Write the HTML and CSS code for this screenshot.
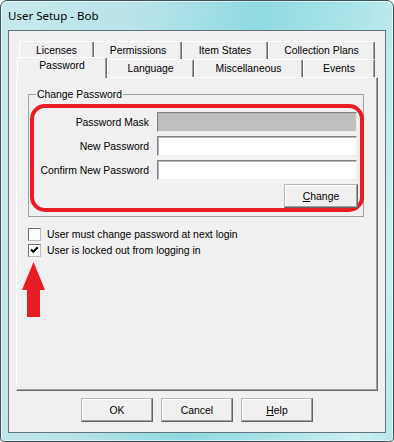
FILE: index.html
```html
<!DOCTYPE html>
<html lang="en">
<head>
  <meta charset="UTF-8">
  <meta name="viewport" content="width=device-width, initial-scale=1.0">
  <title>User Setup - Bob</title>
  <link rel="stylesheet" href="styles.css">
</head>
<body>
  <div class="window">
    <div class="titlebar">User Setup - Bob</div>
    <div class="client">
      <div class="tabs">
        <div class="tab-row back">
          <div class="tab t-licenses">Licenses</div>
          <div class="tab t-permissions">Permissions</div>
          <div class="tab t-states">Item States</div>
          <div class="tab t-plans">Collection Plans</div>
        </div>
        <div class="tab-row front">
          <div class="tab active t-password">Password</div>
          <div class="tab t-language">Language</div>
          <div class="tab t-misc">Miscellaneous</div>
          <div class="tab t-events">Events</div>
        </div>
        <div class="panel">
          <fieldset class="group">
            <legend>Change Password</legend>
            <div class="highlight">
              <div class="form">
                <label>Password Mask</label>
                <div class="field disabled"></div>
                <label>New Password</label>
                <div class="field"></div>
                <label>Confirm New Password</label>
                <div class="field"></div>
              </div>
              <div class="actions">
                <button class="btn btn-change"><u>C</u>hange</button>
              </div>
            </div>
          </fieldset>

          <div class="checks">
            <div class="check">
              <span class="box"></span>
              <span>User must change password at next login</span>
            </div>
            <div class="check">
              <span class="box">
                <svg width="11" height="11" viewBox="0 0 11 11"><path d="M2 4.5 L4.2 6.8 L8.8 2.2" fill="none" stroke="#000" stroke-width="2"/></svg>
              </span>
              <span>User is locked out from logging in</span>
            </div>
          </div>

          <!-- annotation arrow -->
          <svg class="arrow" width="23" height="55" viewBox="0 0 23 55">
            <polygon points="11.5,0 23,28 0,28" fill="#e81c24"/>
            <rect x="5" y="27" width="13" height="28" fill="#e81c24"/>
          </svg>
        </div>
      </div>

      <div class="buttons">
        <button class="btn">OK</button>
        <button class="btn">Cancel</button>
        <button class="btn"><u>H</u>elp</button>
      </div>
    </div>
  </div>
</body>
</html>
```

FILE: styles.css
```css
* {
  box-sizing: border-box;
  margin: 0;
  padding: 0;
}
body {
  background: #fff;
  font-family: 'Liberation Sans', Arial, sans-serif;
  font-size: 10.4px;
  color: #000;
}
.window {
  width: 394px;
  height: 442px;
  border: 1px solid #3f5459;
  border-radius: 7px 7px 4px 4px;
  background: linear-gradient(100deg, #c8e8ec 0%, #b7e4e8 30%, #8fdbe0 55%, #a9e4e7 75%, #cbeff1 92%, #b5e8eb 100%);
  box-shadow: inset 0 0 0 1px rgba(255, 255, 255, 0.55);
  padding: 0 7px 8px;
  display: flex;
  flex-direction: column;
}
.titlebar {
  height: 29px;
  line-height: 29px;
  font-family: 'Noto Sans', sans-serif;
  font-size: 11.5px;
}
.client {
  flex: 1;
  background: #f0f0f0;
  border: 1px solid #5d7478;
  padding: 10px 7px 0;
}

/* tabs */
.tab-row {
  display: flex;
  height: 18px;
}
.tab-row.back {
  padding-left: 3px;
}
.tab-row.front {
  padding-left: 1px;
}
.tab {
  height: 18px;
  line-height: 17px;
  text-align: center;
  background: #f0f0f0;
  border-top: 1px solid #fff;
  border-left: 1px solid #fff;
  border-right: 1px solid #696969;
  box-shadow: inset -1px 0 #a0a0a0;
  border-radius: 2px 2px 0 0;
}
.tab.active {
  height: 21px;
  line-height: 15px;
  margin-top: -2px;
  margin-bottom: -1px;
  position: relative;
  z-index: 1;
}
.t-licenses { width: 75px; }
.t-permissions { width: 88px; }
.t-states { width: 86px; }
.t-plans { width: 107px; }
.t-password { width: 90px; }
.t-language { width: 87px; }
.t-misc { width: 109px; }
.t-events { width: 72px; }

.panel {
  height: 314px;
  border: 1px solid;
  border-color: #fff #696969 #696969 #fff;
  box-shadow: inset -1px -1px #a0a0a0;
}

/* group box */
.group {
  margin: 10px 13px 0 11px;
  border: 1px solid #a0a0a0;
  padding: 0 0 4px 0;
  min-width: 0;
}
.group legend {
  margin-left: 7px;
  padding: 0 1px;
  line-height: 13px;
}
.highlight {
  margin: 3px -1px 0 1px;
  border: 4px solid #e81c24;
  border-radius: 15px;
  padding: 4px 2px 0 0;
}
.form {
  display: grid;
  grid-template-columns: 115px 200px;
  grid-auto-rows: 20px;
  column-gap: 8px;
  row-gap: 4px;
  align-items: center;
}
.form label {
  text-align: right;
  white-space: nowrap;
}
.field {
  height: 20px;
  background: #fff;
  border: 1px solid;
  border-color: #828282 #ececec #ececec #828282;
  box-shadow: inset 1px 1px #b4b4b4;
}
.field.disabled {
  background: #bfbfbf;
}
.actions {
  display: flex;
  justify-content: flex-end;
  margin-top: 4px;
}

/* buttons */
.btn {
  width: 72px;
  height: 24px;
  font: inherit;
  color: #000;
  background: #f0f0f0;
  border: 1px solid;
  border-color: #b8b8b8 #646464 #646464 #b8b8b8;
  box-shadow: inset -1px -1px #a0a0a0, inset 1px 1px #fff;
}
.btn-change {
  width: 74px;
}
.buttons {
  display: flex;
  justify-content: center;
  gap: 8px;
  margin-top: 7px;
}

/* checkboxes */
.checks {
  margin: 9px 0 0 11px;
}
.check {
  display: flex;
  align-items: center;
  gap: 6px;
  height: 16px;
}
.box {
  width: 13px;
  height: 13px;
  background: #fff;
  border: 1px solid;
  border-color: #6f6f6f #bdbdbd #bdbdbd #6f6f6f;
  display: flex;
  align-items: center;
  justify-content: center;
}
.arrow {
  display: block;
  margin: 4px 0 0 5px;
}
```
